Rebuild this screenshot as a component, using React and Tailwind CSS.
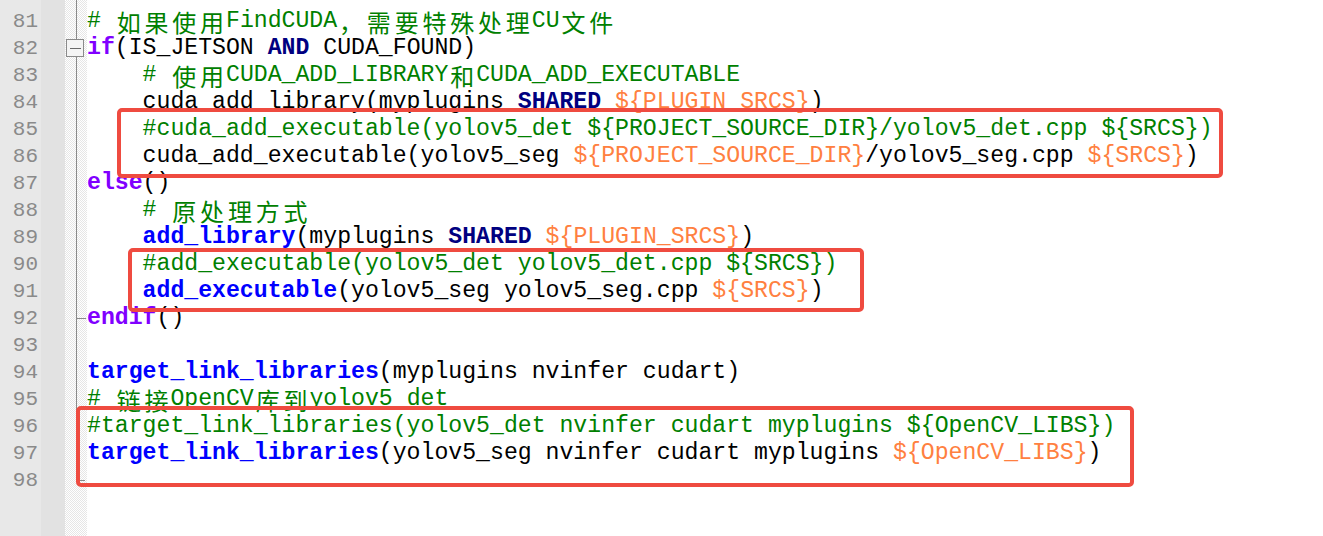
import React from 'react';

// token colours follow the Notepad++ CMake lexer
const COLORS = {
  t: 'text-black',
  c: 'text-[#008000]',
  k: 'text-[#8000ff] font-bold',
  b: 'text-[#0000ff] font-bold',
  n: 'text-[#000080] font-bold',
  v: 'text-[#ff8040]',
};

const LINES = [
  { no: 80, parts: [] },
  { no: 81, parts: [['c', '# 如果使用FindCUDA，需要特殊处理CU文件']] },
  { no: 82, parts: [['k', 'if'], ['t', '(IS_JETSON '], ['n', 'AND'], ['t', ' CUDA_FOUND)']] },
  { no: 83, parts: [['c', '    # 使用CUDA_ADD_LIBRARY和CUDA_ADD_EXECUTABLE']] },
  { no: 84, parts: [['t', '    cuda_add_library(myplugins '], ['n', 'SHARED'], ['t', ' '], ['v', '${PLUGIN_SRCS}'], ['t', ')']] },
  { no: 85, parts: [['c', '    #cuda_add_executable(yolov5_det ${PROJECT_SOURCE_DIR}/yolov5_det.cpp ${SRCS})']] },
  { no: 86, parts: [['t', '    cuda_add_executable(yolov5_seg '], ['v', '${PROJECT_SOURCE_DIR}'], ['t', '/yolov5_seg.cpp '], ['v', '${SRCS}'], ['t', ')']] },
  { no: 87, parts: [['k', 'else'], ['t', '()']] },
  { no: 88, parts: [['c', '    # 原处理方式']] },
  { no: 89, parts: [['t', '    '], ['b', 'add_library'], ['t', '(myplugins '], ['n', 'SHARED'], ['t', ' '], ['v', '${PLUGIN_SRCS}'], ['t', ')']] },
  { no: 90, parts: [['c', '    #add_executable(yolov5_det yolov5_det.cpp ${SRCS})']] },
  { no: 91, parts: [['t', '    '], ['b', 'add_executable'], ['t', '(yolov5_seg yolov5_seg.cpp '], ['v', '${SRCS}'], ['t', ')']] },
  { no: 92, parts: [['k', 'endif'], ['t', '()']] },
  { no: 93, parts: [] },
  { no: 94, parts: [['b', 'target_link_libraries'], ['t', '(myplugins nvinfer cudart)']] },
  { no: 95, parts: [['c', '# 链接OpenCV库到yolov5_det']] },
  { no: 96, parts: [['c', '#target_link_libraries(yolov5_det nvinfer cudart myplugins ${OpenCV_LIBS})']] },
  { no: 97, parts: [['b', 'target_link_libraries'], ['t', '(yolov5_seg nvinfer cudart myplugins '], ['v', '${OpenCV_LIBS}'], ['t', ')']] },
  { no: 98, parts: [] },
];

const isWide = (ch) => /[\u3000-\u9fff\uff00-\uffef]/.test(ch);

// CJK glyphs take two columns in the editor
function Segment({ kind, text }) {
  const chunks = [];
  let buf = '';
  for (const ch of text) {
    if (isWide(ch)) {
      if (buf) chunks.push(buf);
      buf = '';
      chunks.push({ wide: ch });
    } else {
      buf += ch;
    }
  }
  if (buf) chunks.push(buf);

  return (
    <span className={COLORS[kind]}>
      {chunks.map((c, i) =>
        typeof c === 'string' ? (
          <span key={i}>{c}</span>
        ) : (
          <span
            key={i}
            className="inline-block align-top h-[27px] leading-[27px] w-[27.8px] text-center font-normal text-[24px] [font-family:'Noto_Sans_CJK_SC',sans-serif]"
          >
            {c.wide}
          </span>
        )
      )}
    </span>
  );
}

function FoldMargin() {
  return (
    <svg width="22" height="536" className="block">
      <line x1="11.5" y1="0" x2="11.5" y2="39" stroke="#8a8a8a" />
      <line x1="11.5" y1="57" x2="11.5" y2="481" stroke="#8a8a8a" />
      <rect x="1.5" y="39.5" width="17" height="17" fill="#f4f4f4" stroke="#8a8a8a" />
      <line x1="5" y1="48.5" x2="16" y2="48.5" stroke="#6a6a6a" />
      <line x1="11.5" y1="318.5" x2="21" y2="318.5" stroke="#8a8a8a" />
      <line x1="11.5" y1="480.5" x2="20" y2="480.5" stroke="#8a8a8a" />
    </svg>
  );
}

export default function App() {
  return (
    <div className="relative w-[1323px] h-[536px] overflow-hidden bg-white flex">
      {/* line numbers */}
      <div className="w-[41px] shrink-0 bg-[#e8e8e8] [font-family:'Liberation_Mono',monospace] text-[21px] text-[#8a8a8a]">
        <div className="mt-[-19px]">
          {LINES.map((l) => (
            <div key={l.no} className="h-[27px] leading-[27px] text-right pr-[3px]">
              {l.no}
            </div>
          ))}
        </div>
      </div>
      {/* bookmark margin */}
      <div className="w-[24px] shrink-0 bg-[#e2e2e2]" />
      {/* fold margin */}
      <div className="w-[22px] shrink-0 bg-[repeating-conic-gradient(#e6e6e6_0_25%,#ffffff_0_50%)] bg-[length:2px_2px]">
        <FoldMargin />
      </div>
      {/* code */}
      <div className="flex-1 [font-family:'Liberation_Mono',monospace] text-[23.17px] whitespace-pre">
        <div className="mt-[-19px]">
          {LINES.map((l) => (
            <div key={l.no} className="h-[27px] leading-[27px]">
              {l.parts.map(([k, t], i) => (
                <Segment key={i} kind={k} text={t} />
              ))}
            </div>
          ))}
        </div>
      </div>

      {/* red highlight boxes */}
      <div className="absolute left-[117px] top-[108px] w-[1106px] h-[70px] border-4 border-[#ef4b40] rounded-[5px]" />
      <div className="absolute left-[128px] top-[248px] w-[736px] h-[64px] border-4 border-[#ef4b40] rounded-[5px]" />
      <div className="absolute left-[76px] top-[406px] w-[1058px] h-[81px] border-4 border-[#ef4b40] rounded-[5px]" />
    </div>
  );
}
